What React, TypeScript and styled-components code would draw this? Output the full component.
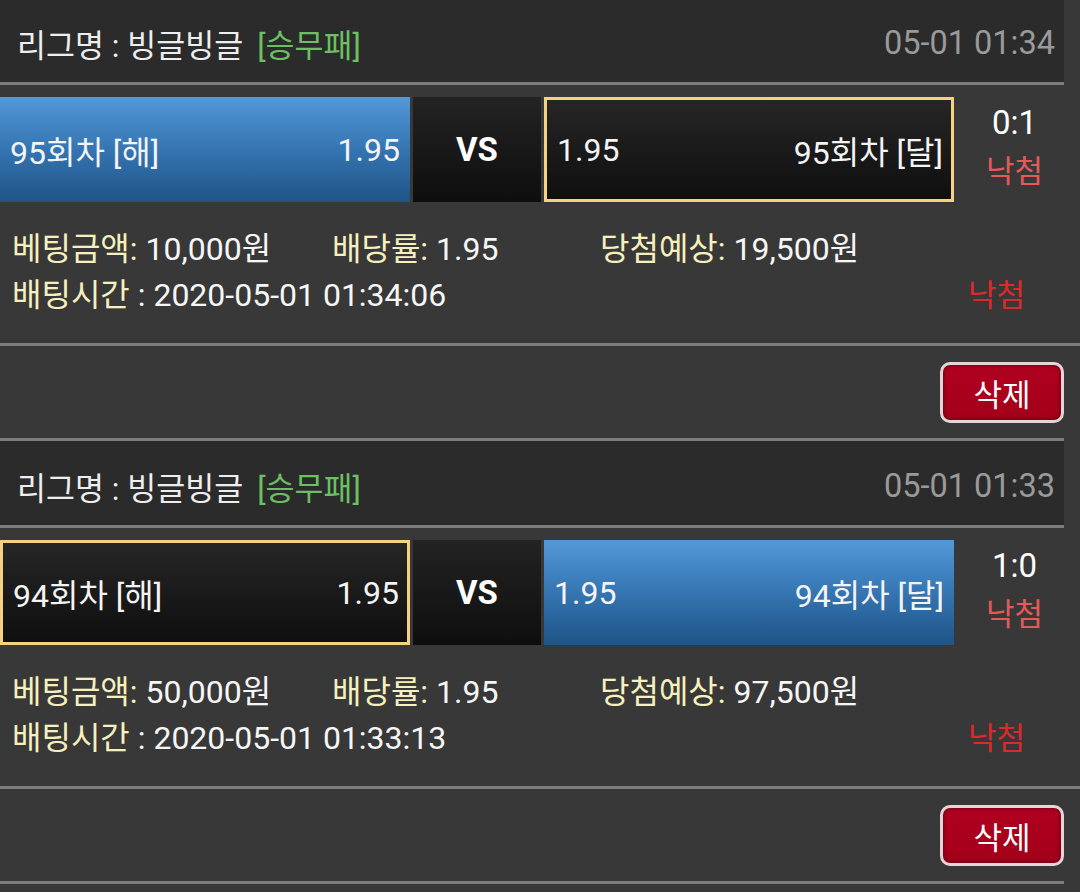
import styled, {createGlobalStyle} from "styled-components";

const GlobalStyle = createGlobalStyle`
  html, body {
    margin: 0;
    padding: 0;
    background: #383838;
  }
  body {
    font-family: Roboto, "Noto Sans CJK KR", sans-serif;
    color: #f2f2f2;
  }
`

const Page = styled.div`
  width: 1080px;
  height: 892px;
  overflow: hidden;
  background: #383838;
`

// the list is scrolled a couple of pixels in the screenshot
const List = styled.div`
  margin-top: -2px;
`

const Card = styled.section`
  display: flex;
  flex-direction: column;
`

const Header = styled.header`
  width: 1064px;
  height: 84px;
  box-sizing: border-box;
  padding: 6px 9px 0 17px;
  display: flex;
  align-items: center;
  justify-content: space-between;
  background: #2b2b2b;
  font-size: 31.5px;
`

const League = styled.span`
  color: #eeeeee;
`

const GameType = styled.span`
  color: #6cc062;
  margin-left: 14px;
`

const Time = styled.span`
  color: #9a9a9a;
  font-size: 32.5px;
`

const Divider = styled.hr<{ $full?: boolean }>`
  margin: 0;
  border: 0;
  height: 3px;
  background: #7d7d7d;
  width: ${p => p.$full ? "1080px" : "1064px"};
`

const MatchRow = styled.div`
  margin-top: 12px;
  height: 105px;
  display: grid;
  grid-template-columns: 410px 128px 410px 1fr;
  column-gap: 3px;
`

const Pick = styled.div<{ $selected?: boolean; $reverse?: boolean }>`
  box-sizing: border-box;
  display: flex;
  flex-direction: ${p => p.$reverse ? "row-reverse" : "row"};
  align-items: center;
  justify-content: space-between;
  font-size: 32px;
  color: #f4f4f4;
  padding: ${p => p.$selected ? "0 8px 0 10px" : "0 10px 0 10px"};
  background: ${p => p.$selected
    ? "linear-gradient(#262626, #0f0f0f)"
    : "linear-gradient(#5398d8, #3575b2 50%, #1f5486)"};
  border: ${p => p.$selected ? "3px solid #f4d281" : "0"};
`

const Vs = styled.div`
  display: flex;
  align-items: center;
  justify-content: center;
  background: linear-gradient(#232323, #0e0e0e);
  font-size: 33px;
  font-weight: 700;
  color: #ffffff;
`

const Result = styled.div`
  display: flex;
  flex-direction: column;
  align-items: center;
  justify-content: center;
  gap: 4px;
  padding: 0 8px 6px 0;
`

const Score = styled.span`
  color: #ffffff;
  font-size: 33px;
`

const Lose = styled.span<{ $strong?: boolean }>`
  color: ${p => p.$strong ? "#d92b2b" : "#e35a5a"};
  font-size: 31px;
`

const Info = styled.div`
  padding: 21px 0 28px 12px;
  display: grid;
  grid-template-columns: 320px 268px 1fr;
  grid-auto-rows: 46px;
  align-items: center;
  font-size: 32px;
  color: #f6f6f6;
`

const Label = styled.span`
  color: #f5f0bd;
`

const TimeLine = styled.div`
  grid-column: 1 / span 3;
  display: flex;
  align-items: center;
  justify-content: space-between;
  padding-right: 55px;
`

const Actions = styled.div`
  width: 1064px;
  display: flex;
  justify-content: flex-end;
  padding: 16px 0 15px;
`

const DeleteButton = styled.button`
  width: 124px;
  height: 61px;
  box-sizing: border-box;
  border: 3px solid #e4d6d8;
  border-radius: 10px;
  background: linear-gradient(#b00020, #a30019);
  box-shadow: inset 0 0 4px rgba(0, 0, 0, 0.5);
  color: #ffffff;
  font-family: Roboto, "Noto Sans CJK KR", sans-serif;
  font-size: 31px;
  padding: 0;
  cursor: pointer;
`

interface Bet {
  round: number
  time: string
  pick: "home" | "away"
  score: string
  amount: string
  expected: string
  placedAt: string
}

const bets: Bet[] = [
  {round: 95, time: "05-01 01:34", pick: "away", score: "0:1", amount: "10,000원", expected: "19,500원", placedAt: "2020-05-01 01:34:06"},
  {round: 94, time: "05-01 01:33", pick: "home", score: "1:0", amount: "50,000원", expected: "97,500원", placedAt: "2020-05-01 01:33:13"},
]

function BetCard({bet}: { bet: Bet }) {
  return (
    <Card>
      <Header>
        <League>
          리그명 : 빙글빙글
          <GameType>[승무패]</GameType>
        </League>
        <Time>{bet.time}</Time>
      </Header>
      <Divider/>
      <MatchRow>
        <Pick $selected={bet.pick === "home"}>
          <span>{bet.round}회차 [해]</span>
          <span>1.95</span>
        </Pick>
        <Vs>VS</Vs>
        <Pick $selected={bet.pick === "away"} $reverse>
          <span>{bet.round}회차 [달]</span>
          <span>1.95</span>
        </Pick>
        <Result>
          <Score>{bet.score}</Score>
          <Lose>낙첨</Lose>
        </Result>
      </MatchRow>
      <Info>
        <span><Label>베팅금액:</Label> {bet.amount}</span>
        <span><Label>배당률:</Label> 1.95</span>
        <span><Label>당첨예상:</Label> {bet.expected}</span>
        <TimeLine>
          <span><Label>배팅시간</Label> : {bet.placedAt}</span>
          <Lose $strong>낙첨</Lose>
        </TimeLine>
      </Info>
      <Divider $full/>
      <Actions>
        <DeleteButton>삭제</DeleteButton>
      </Actions>
      <Divider/>
    </Card>
  )
}

export default function App() {
  return (
    <Page>
      <GlobalStyle/>
      <List>
        {bets.map(bet => <BetCard key={bet.round} bet={bet}/>)}
      </List>
    </Page>
  )
}
